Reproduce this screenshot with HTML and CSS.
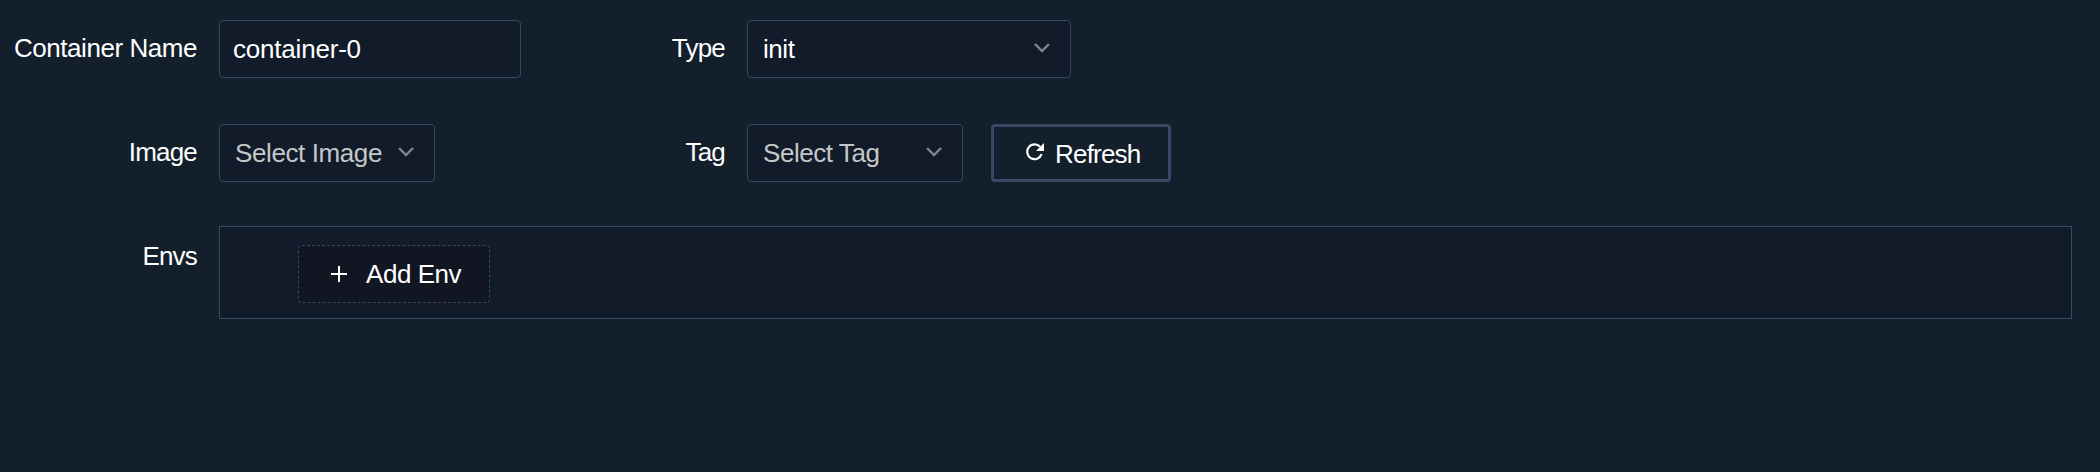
FILE: index.html
```
<!DOCTYPE html>
<html lang="en">
<head>
<meta charset="utf-8">
<title>Container</title>
<link rel="stylesheet" href="styles.css">
</head>
<body>
<form class="form">
  <div class="row">
    <label class="label name-label"><span>Container Name</span></label>
    <div class="cell"><div class="field input"><span class="t-name">container-0</span></div></div>
    <label class="label mid-label"><span class="tight">Type</span></label>
    <div class="field select wide"><span class="t-init">init</span><svg class="chevron" viewBox="0 0 18 12"><path d="M2 2l7 7 7-7"/></svg></div>
  </div>
  <div class="row">
    <label class="label name-label"><span class="tight">Image</span></label>
    <div class="cell"><div class="field select empty"><span class="t-si">Select Image</span><svg class="chevron" viewBox="0 0 18 12"><path d="M2 2l7 7 7-7"/></svg></div></div>
    <label class="label mid-label"><span class="tight">Tag</span></label>
    <div class="field select empty"><span class="t-st">Select Tag</span><svg class="chevron" viewBox="0 0 18 12"><path d="M2 2l7 7 7-7"/></svg></div>
    <button type="button" class="refresh"><svg class="reload" viewBox="0 0 18 18"><path class="arc" d="M15.6 11.2A7.4 7.4 0 1 1 14.2 3.9"/><path class="head" d="M18 0v8h-8z"/></svg><span class="t-refresh">Refresh</span></button>
  </div>
  <div class="row envs-row">
    <label class="label name-label envs-label"><span class="tight">Envs</span></label>
    <div class="envs"><button type="button" class="add"><svg class="plus" viewBox="0 0 16 16"><path d="M8 0v16M0 8h16"/></svg><span class="t-add">Add Env</span></button></div>
  </div>
</form>
</body>
</html>
```
FILE: styles.css
```
* { box-sizing: border-box; }
body {
  margin: 0;
  height: 472px;
  background: #141f2c;
  color: #fff;
  font: 26px/30px "Liberation Sans", Arial, sans-serif;
  letter-spacing: -0.45px;
}
.form { display: flex; flex-direction: column; padding: 20px 28px 0 0; }
.row { display: flex; height: 58px; margin-bottom: 46px; }
.label { display: flex; align-items: center; justify-content: flex-end; padding-bottom: 2px; white-space: nowrap; }
.name-label { width: 197px; margin-right: 22px; }
.cell { width: 416px; }
.mid-label { width: 90px; margin-right: 22px; }
.tight { letter-spacing: -0.8px; }
.t-name { letter-spacing: -0.2px; }
.t-si { letter-spacing: -0.4px; }
.t-refresh { padding-top: 2px; letter-spacing: -0.8px; }
.field {
  display: flex;
  align-items: center;
  height: 58px;
  border: 1px solid #364866;
  border-radius: 4px;
  background: #121b29;
  white-space: nowrap;
}
.input { width: 302px; padding-left: 13px; }
.select { width: 216px; justify-content: space-between; padding: 0 19px 0 15px; }
.wide { width: 324px; }
.empty { color: #c4c7ca; }
.chevron { width: 18px; height: 12px; margin-bottom: 2px; fill: none; stroke: #7d8491; stroke-width: 2.4; }
.refresh, .add { display: flex; align-items: center; height: 58px; padding: 0; color: inherit; font: inherit; letter-spacing: inherit; }
.refresh { width: 180px; margin-left: 28px; padding-left: 32px; border: 3px solid #364866; border-radius: 4px; background: transparent; }
.reload { width: 18px; height: 18px; margin: 0 11px 3px 0; }
.arc { fill: none; stroke: #fff; stroke-width: 2.2; }
.head { fill: #fff; }
.envs-row { height: 93px; margin: -2px 0 0; }
.envs-label { height: 62px; }
.envs { flex: 1; padding: 18px 0 0 78px; border: 1px solid #364866; background: #121b29; }
.add { width: 192px; padding-left: 32px; border: 1px dashed #364866; border-radius: 4px; background: #121622; }
.plus { width: 16px; height: 16px; margin-right: 19px; fill: none; stroke: #fff; stroke-width: 2; }
```
